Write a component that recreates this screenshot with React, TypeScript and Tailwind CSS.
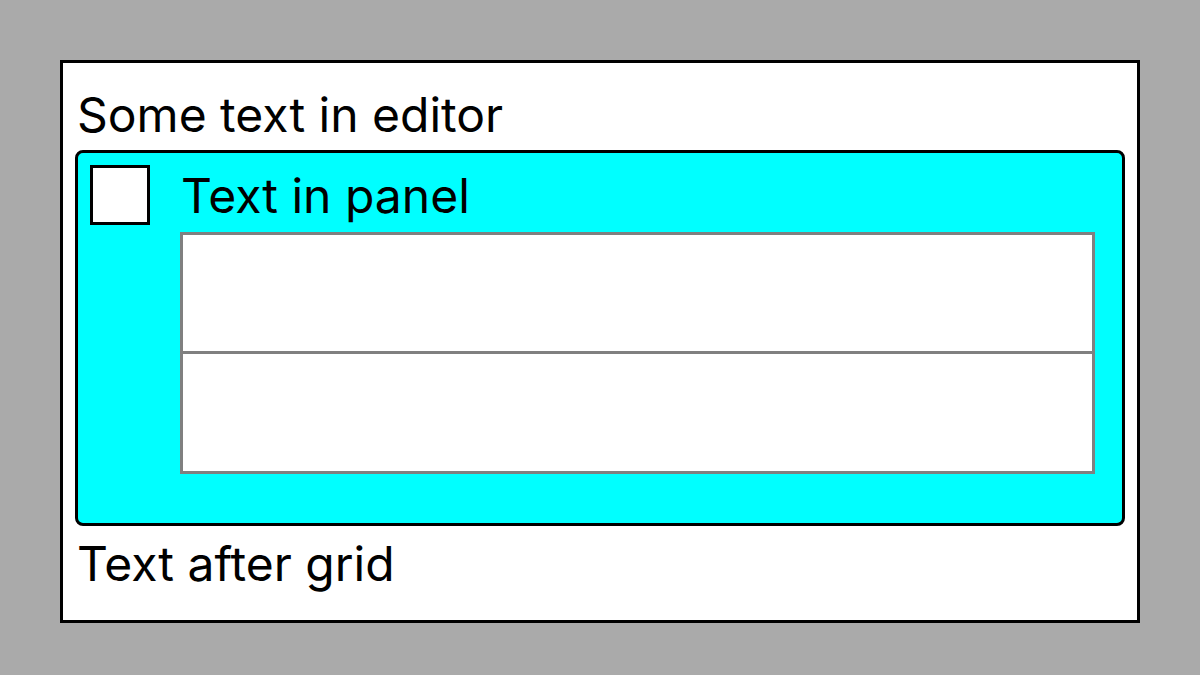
import React from "react";

function Grid() {
  return (
    <div className="flex flex-col gap-[3px] p-[3px] w-[915px] bg-[#808080]">
      <div className="h-[116px] bg-white"></div>
      <div className="h-[117px] bg-white"></div>
    </div>
  );
}

export default function App() {
  return (
    <div
      className="w-[1200px] h-[675px] bg-[#aaaaaa] pt-[60px] pl-[60px]"
      style={{ fontFamily: "Inter, 'Liberation Sans', sans-serif" }}
    >
      <div className="w-[1080px] border-[3px] border-solid border-black bg-white pt-[24px] pb-[28px] px-[12px] text-black">
        <p className="text-[48px] leading-[56px] pl-[2px]">Some text in editor</p>
        <div className="mt-[7px] flex gap-[30px] border-[3px] border-solid border-black rounded-[8px] bg-[#00ffff] pt-[12px] pl-[12px] pr-[27px] pb-[49px]">
          <div className="w-[60px] h-[60px] shrink-0 border-[3px] border-solid border-black bg-white"></div>
          <div className="flex flex-col pt-[3px]">
            <p className="text-[48px] leading-[56px] pl-[1px]">Text in panel</p>
            <div className="mt-[8px]">
              <Grid />
            </div>
          </div>
        </div>
        <p className="mt-[10px] text-[48px] leading-[56px] pl-[2px]">Text after grid</p>
      </div>
    </div>
  );
}
